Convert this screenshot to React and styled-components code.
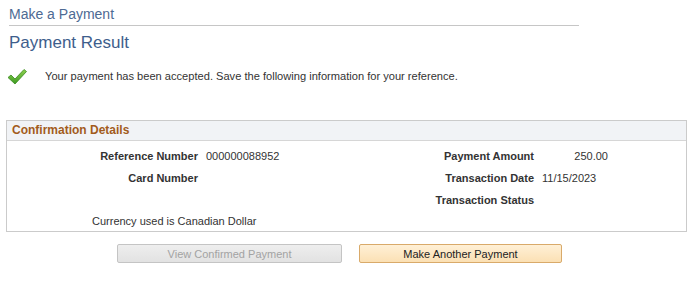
import React from "react";
import styled, { createGlobalStyle } from "styled-components";

const GlobalStyle = createGlobalStyle`
  body {
    margin: 0;
    background: #ffffff;
    font-family: "Liberation Sans", Arial, sans-serif;
  }
`;

const Page = styled.div`
  width: 700px;
  height: 296px;
  padding: 6px 14px 0 6px;
  box-sizing: border-box;
`;

const PageTitle = styled.div`
  margin-left: 3px;
  width: 570px;
  color: #4d6a93;
  font-size: 14px;
  line-height: 16px;
  padding-bottom: 3px;
  border-bottom: 1px solid #c6c6c6;
`;

const ResultTitle = styled.h1`
  margin: 6px 0 0 3px;
  color: #3e5e8c;
  font-size: 17px;
  font-weight: normal;
  line-height: 22px;
`;

const Message = styled.div`
  display: flex;
  align-items: center;
  margin-top: 12px;
  margin-left: 1px;
  height: 20px;
  gap: 18px;
  color: #333333;
  font-size: 11.1px;
`;

const Panel = styled.div`
  margin-top: 34px;
  border: 1px solid #cbcbcb;
  width: 681px;
  box-sizing: border-box;
`;

const PanelHeader = styled.div`
  height: 19px;
  background: #f1f3f6;
  border-bottom: 1px solid #d6d6d6;
  color: #a25b1c;
  font-weight: bold;
  font-size: 12px;
  line-height: 19px;
  padding-left: 5px;
`;

const Grid = styled.div`
  display: grid;
  grid-template-columns: 191px 222px 114px 74px;
  grid-auto-rows: 22px;
  padding-top: 4px;
  font-size: 11px;
  color: #333333;
`;

const Label = styled.div`
  font-weight: bold;
  text-align: right;
  line-height: 22px;
  white-space: nowrap;
`;

const Value = styled.div`
  line-height: 22px;
  padding-left: ${(p) => (p.$right ? "0" : "8px")};
  text-align: ${(p) => (p.$right ? "right" : "left")};
  white-space: nowrap;
`;

const Note = styled.div`
  padding-left: 85px;
  font-size: 11px;
  color: #333333;
  line-height: 20px;
  height: 20px;
`;

const Buttons = styled.div`
  display: flex;
  gap: 17px;
  margin-top: 12px;
  margin-left: 111px;
`;

const Button = styled.button`
  height: 19px;
  padding: 0;
  width: ${(p) => p.$width}px;
  font-family: "Liberation Sans", Arial, sans-serif;
  font-size: 11px;
  border-radius: 2px;
  border: 1px solid ${(p) => (p.$primary ? "#d9aa6a" : "#c4c4c4")};
  background: ${(p) =>
    p.$primary
      ? "linear-gradient(#fff0d6, #fbe0b4)"
      : "linear-gradient(#eeeeee, #e2e2e2)"};
  color: ${(p) => (p.$primary ? "#222222" : "#a3a3a3")};
`;

const CheckIcon = () => (
  <svg width="20" height="17" viewBox="0 0 20 17">
    <defs>
      <linearGradient id="g" x1="0" y1="0" x2="0" y2="1">
        <stop offset="0" stopColor="#8fd14f" />
        <stop offset="1" stopColor="#3c9a22" />
      </linearGradient>
    </defs>
    <path
      d="M1 9.5 L4 7 L8 11 L17 1.5 L19.5 3.5 L8 16 Z"
      fill="url(#g)"
      stroke="#3a8a20"
      strokeWidth="0.8"
      strokeLinejoin="round"
    />
  </svg>
);

export default function App() {
  return (
    <Page>
      <GlobalStyle />
      <PageTitle>Make a Payment</PageTitle>
      <ResultTitle>Payment Result</ResultTitle>
      <Message>
        <CheckIcon />
        <span>
          Your payment has been accepted. Save the following information for
          your reference.
        </span>
      </Message>
      <Panel>
        <PanelHeader>Confirmation Details</PanelHeader>
        <Grid>
          <Label>Reference Number</Label>
          <Value>000000088952</Value>
          <Label>Payment Amount</Label>
          <Value $right>250.00</Value>
          <Label>Card Number</Label>
          <Value />
          <Label>Transaction Date</Label>
          <Value>11/15/2023</Value>
          <div />
          <div />
          <Label>Transaction Status</Label>
          <Value />
        </Grid>
        <Note>Currency used is Canadian Dollar</Note>
      </Panel>
      <Buttons>
        <Button $width={225} disabled>
          View Confirmed Payment
        </Button>
        <Button $width={203} $primary>
          Make Another Payment
        </Button>
      </Buttons>
    </Page>
  );
}
